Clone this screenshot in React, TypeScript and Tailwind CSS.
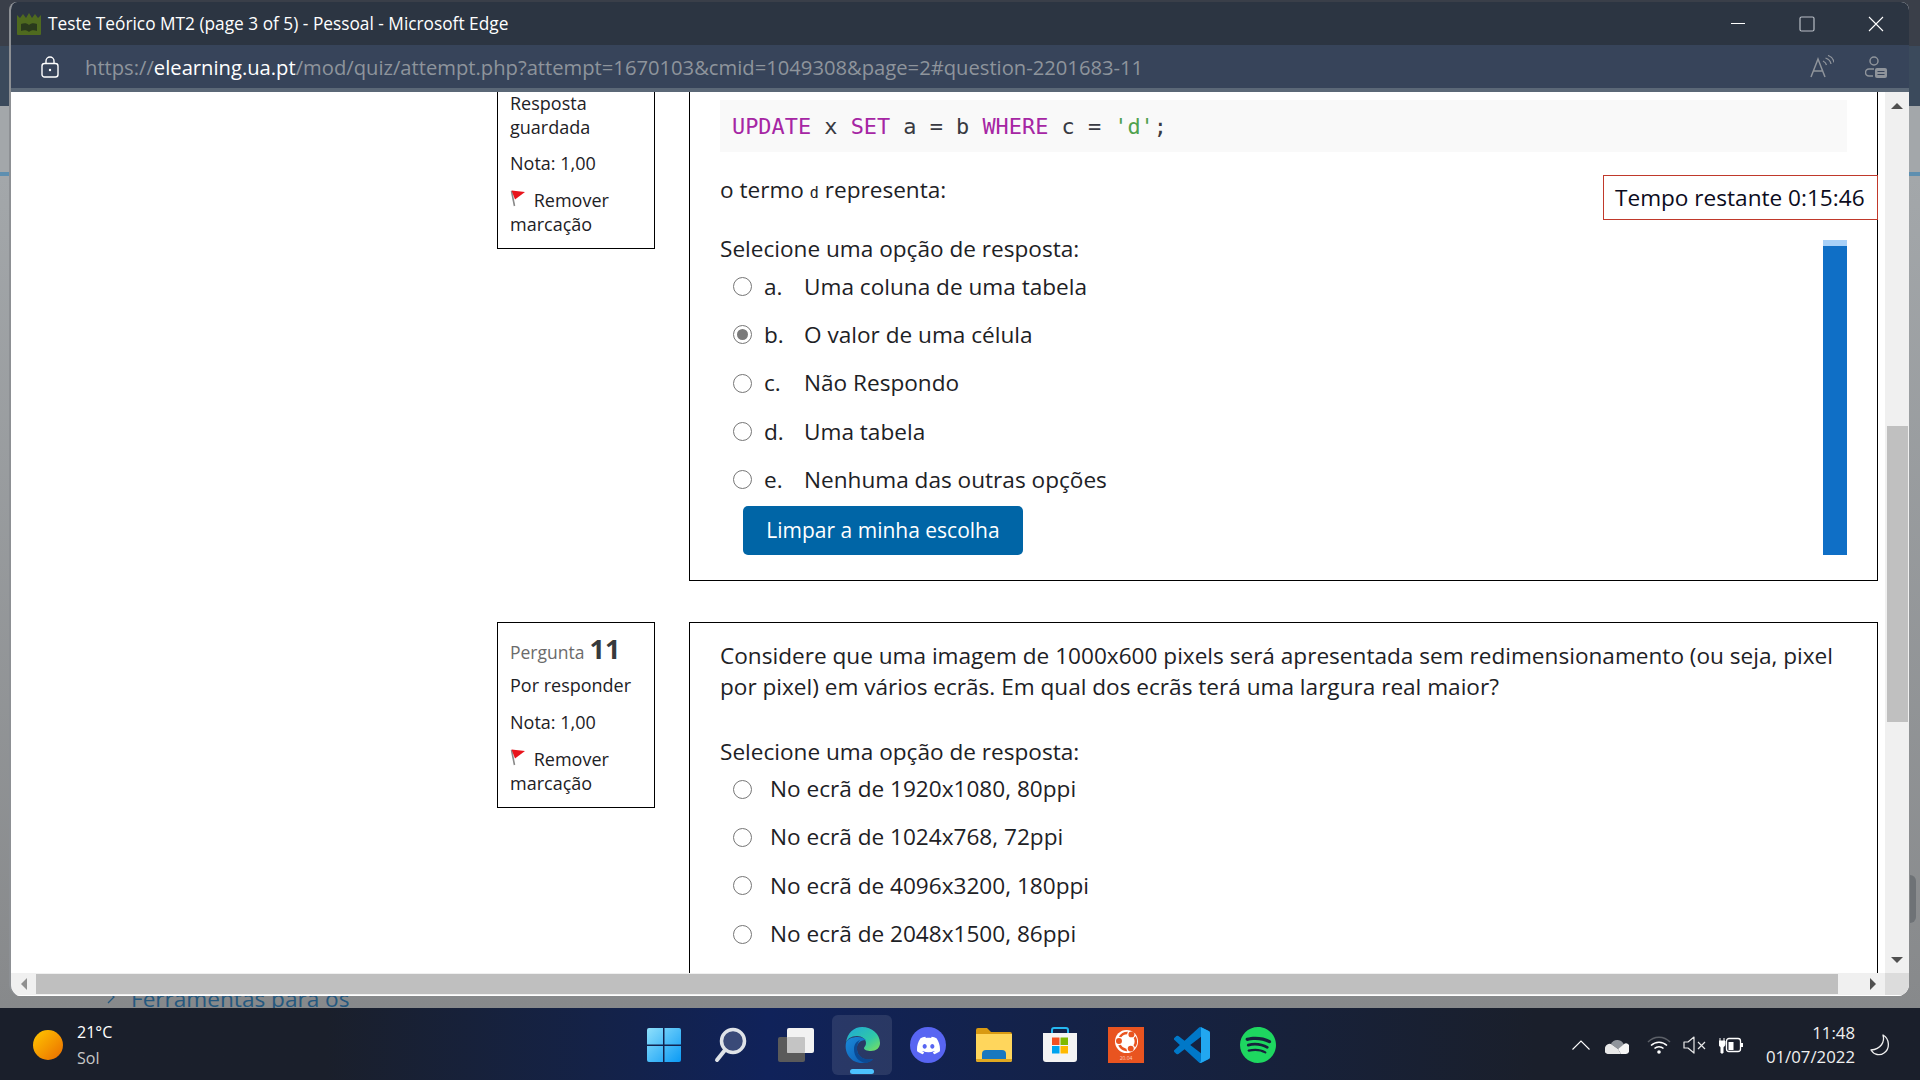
import { SiDiscord, SiSpotify, SiUbuntu } from 'react-icons/si';

const firstOptions = [
  { letter: 'a.', text: 'Uma coluna de uma tabela' },
  { letter: 'b.', text: 'O valor de uma célula', checked: true },
  { letter: 'c.', text: 'Não Respondo' },
  { letter: 'd.', text: 'Uma tabela' },
  { letter: 'e.', text: 'Nenhuma das outras opções' },
];

const secondOptions = [
  'No ecrã de 1920x1080, 80ppi',
  'No ecrã de 1024x768, 72ppi',
  'No ecrã de 4096x3200, 180ppi',
  'No ecrã de 2048x1500, 86ppi',
];

function Flag() {
  return (
    <svg width="16" height="17" viewBox="0 0 16 17" className="inline-block align-[0px]">
      <path d="M1.5 1l3 15" stroke="#8a8a8a" strokeWidth="1.6" />
      <path d="M1.5 0.5L15 2 5 9.5z" fill="#e8141c" />
    </svg>
  );
}

function Radio({ checked }: { checked?: boolean }) {
  return (
    <span className="mt-[1px] flex h-[19px] w-[19px] shrink-0 items-center justify-center rounded-full border-[1.5px] border-[#767676] bg-white">
      {checked && <span className="h-[11px] w-[11px] rounded-full bg-[#7a7a7a]" />}
    </span>
  );
}

function MarkToggle() {
  return (
    <div className="mt-[13px] leading-6">
      <Flag /> <span className="ml-[3px]">Remover</span>
      <br />
      marcação
    </div>
  );
}

function Favicon() {
  return (
    <svg width="24" height="23" viewBox="0 0 24 23">
      <rect width="24" height="23" rx="1" fill="#4f6a1f" />
      <path d="M0 0h24v3l-3 3-3-4-3 4-3-5-3 5-3-4-3 4-3-3z" fill="#2c3542" />
      <path d="M4 12c3-1 6-1 8 1 2-2 5-2 8-1v7c-3-1-6-1-8 1-2-2-5-2-8-1z" fill="#2a3a1c" />
    </svg>
  );
}

function WinControls() {
  return (
    <div className="flex items-center text-white">
      <svg width="16" height="16" viewBox="0 0 16 16" className="mr-[53px]">
        <path d="M1 7.5h14" stroke="#fff" strokeWidth="1" />
      </svg>
      <svg width="16" height="16" viewBox="0 0 16 16" className="mr-[53px]">
        <rect x="1" y="1" width="14" height="14" rx="1.5" fill="none" stroke="#b9bec6" strokeWidth="1.2" />
      </svg>
      <svg width="16" height="16" viewBox="0 0 16 16" className="mr-[25px]">
        <path d="M1 1l14 14M15 1L1 15" stroke="#fff" strokeWidth="1.1" />
      </svg>
    </div>
  );
}

function EdgeIcon() {
  return (
    <svg width="36" height="36" viewBox="0 0 36 36">
      <defs>
        <linearGradient id="edgeA" x1="0" y1="0" x2="1" y2="1">
          <stop offset="0" stopColor="#1fa8d8" />
          <stop offset="0.6" stopColor="#2fc8a8" />
          <stop offset="1" stopColor="#7ee05a" />
        </linearGradient>
        <linearGradient id="edgeB" x1="0" y1="0" x2="1" y2="1">
          <stop offset="0" stopColor="#1a88d8" />
          <stop offset="1" stopColor="#0c5ab0" />
        </linearGradient>
      </defs>
      <path d="M2 16C3 6 10 0 18 0c10 0 18 7 18 16 0 5-4 8-9 8-4 0-7-1-7-3 0-1 2-2 2-5 0-4-4-7-9-7-6 0-10 3-11 7z" fill="url(#edgeA)" />
      <path d="M2 16c-2 10 5 20 16 20 4 0 8-1 11-4-7 2-15-1-16-9-1-6 3-10 9-10-2-2-5-3-8-3-6 0-11 2-12 6z" fill="url(#edgeB)" />
      <path d="M13 22c0 8 9 12 16 10 1 0-2 3-7 4-7-1-12-6-12-14 0-5 3-8 6-9-2 2-3 5-3 9z" fill="#0b4a94" />
    </svg>
  );
}

function VsCodeIcon() {
  return (
    <svg width="36" height="36" viewBox="0 0 100 100">
      <path
        fillRule="evenodd"
        fill="#0078c8"
        d="M70.9 99.3a6.2 6.2 0 0 0 5-.2l20.6-9.9a6.2 6.2 0 0 0 3.5-5.6V16.4a6.2 6.2 0 0 0-3.5-5.6L75.9.9a6.2 6.2 0 0 0-7.1 1.2L29.4 38 12.2 25a4.2 4.2 0 0 0-5.3.2l-5.5 5a4.2 4.2 0 0 0 0 6.2L16.3 50 1.4 63.6a4.2 4.2 0 0 0 0 6.2l5.5 5a4.2 4.2 0 0 0 5.3.2l17.2-13 39.4 35.9a6.2 6.2 0 0 0 2.1 1.4ZM75 27.3 45.1 50 75 72.7V27.3Z"
      />
      <path fill="#22a7f0" d="M75 0.4l21.5 10.4a6.2 6.2 0 0 1 3.5 5.6v67.2a6.2 6.2 0 0 1-3.5 5.6L75.9 99.1a6.2 6.2 0 0 1-5-.2 6.2 6.2 0 0 0 4.1-5.8z" />
    </svg>
  );
}

function TaskbarIcons() {
  return (
    <div className="flex items-center gap-[30px]">
      {/* start */}
      <svg width="36" height="36" viewBox="0 0 36 36">
        <defs>
          <linearGradient id="startA" x1="0" y1="0" x2="1" y2="1">
            <stop offset="0" stopColor="#8fe0fb" />
            <stop offset="1" stopColor="#0a9af5" />
          </linearGradient>
        </defs>
        <path d="M1 3a2 2 0 0 1 2-2h14v16.5H1zM18.5 1H33a2 2 0 0 1 2 2v14.500H18.500zM1 19h16v16H3a2 2 0 0 1-2-2zM18.500 19H35v14a2 2 0 0 1-2 2H18.500z" fill="url(#startA)" />
      </svg>
      {/* search */}
      <svg width="36" height="36" viewBox="0 0 36 36">
        <circle cx="21" cy="14" r="11.500" fill="#3a4a78" stroke="#dfe3e8" strokeWidth="3.500" />
        <path d="M13 23L5 33" stroke="#dfe3e8" strokeWidth="4" strokeLinecap="round" />
      </svg>
      {/* task view */}
      <svg width="36" height="36" viewBox="0 0 36 36">
        <rect x="0" y="10" width="27" height="25" rx="2" fill="#5a5a5a" />
        <rect x="9" y="1" width="27" height="25" rx="2" fill="#f2f2f2" />
        <rect x="9" y="10" width="18" height="16" rx="1" fill="#c4c4c4" />
      </svg>
      {/* edge, running */}
      <div className="relative h-[36px] w-[36px]">
        <div className="absolute -left-[12px] -top-[12px] h-[60px] w-[60px] rounded-md bg-[#ffffff]/10" />
        <div className="absolute left-[6px] top-[42px] h-[5px] w-[24px] rounded-full bg-[#4cc2ff]" />
        <div className="relative">
          <EdgeIcon />
        </div>
      </div>
      {/* discord */}
      <div className="flex h-[36px] w-[36px] items-center justify-center rounded-full bg-[#5865f2]">
        <SiDiscord className="text-[23px] text-white" />
      </div>
      {/* explorer */}
      <svg width="36" height="36" viewBox="0 0 36 36">
        <path d="M0 3a2 2 0 0 1 2-2h9l4 4h19a2 2 0 0 1 2 2v4H0z" fill="#d99a12" />
        <path d="M0 7h36v26a2 2 0 0 1-2 2H2a2 2 0 0 1-2-2z" fill="#ffd65c" />
        <path d="M6 35v-8a4 4 0 0 1 4-4h16a4 4 0 0 1 4 4v8z" fill="#1878c0" />
        <path d="M0 32h36v1a2 2 0 0 1-2 2H2a2 2 0 0 1-2-2z" fill="#e0a820" />
      </svg>
      {/* store */}
      <svg width="36" height="36" viewBox="0 0 36 36">
        <path d="M10 7V3a2 2 0 0 1 2-2h12a2 2 0 0 1 2 2v4" fill="none" stroke="#25b7f0" strokeWidth="2" />
        <path d="M1 6h34v26a3 3 0 0 1-3 3H4a3 3 0 0 1-3-3z" fill="#f4f4f4" />
        <rect x="10" y="10.500" width="7.500" height="7.500" fill="#f25022" />
        <rect x="18.500" y="10.500" width="7.500" height="7.500" fill="#7fba00" />
        <rect x="10" y="19" width="7.500" height="7.500" fill="#00a4ef" />
        <rect x="18.500" y="19" width="7.500" height="7.500" fill="#ffb900" />
      </svg>
      {/* ubuntu */}
      <div className="flex h-[36px] w-[36px] flex-col items-center bg-[#e95420] pt-[3px]">
        <div className="flex h-[23px] w-[23px] items-center justify-center rounded-full bg-white">
          <SiUbuntu className="text-[21px] text-[#e95420]" />
        </div>
        <span className="mt-[2px] text-[5px] leading-[6px] text-[#ffd0c0]">20.04</span>
      </div>
      <VsCodeIcon />
      <SiSpotify className="text-[36px] text-[#1ed760]" />
    </div>
  );
}

function TrayIcons() {
  return (
    <div className="flex items-center">
      <svg width="18" height="10" viewBox="0 0 18 10" className="mr-[15px]">
        <path d="M0.500 9.500L9 1l8.500 8.500" fill="none" stroke="#fff" strokeWidth="1.100" />
      </svg>
      <svg width="24" height="17" viewBox="0 0 24 17" className="mr-[18px]">
        <path d="M6 7a7 7 0 0 1 13 1l-6 4z" fill="#8f949b" />
        <path d="M0 13a5 5 0 0 1 6-6l7 5 3 5H3a3 3 0 0 1-3-4z" fill="#e8e8e8" />
        <path d="M13 12l5-4a3.500 3.500 0 0 1 6 5 3.500 3.500 0 0 1-3 4h-5z" fill="#f6f6f6" />
      </svg>
      <svg width="24" height="18" viewBox="0 0 24 18" className="mr-[12px]">
        <path d="M1 6c6-6.500 16-6.500 22 0" fill="none" stroke="#5c6068" strokeWidth="1.500" />
        <path d="M4 9.500c4.500-4.500 11.500-4.500 16 0M7.500 12.500c2.500-2.500 6.500-2.500 9 0" fill="none" stroke="#fff" strokeWidth="1.500" />
        <circle cx="12" cy="16" r="1.800" fill="#fff" />
      </svg>
      <svg width="23" height="18" viewBox="0 0 23 18" className="mr-[13px]">
        <path d="M1 6v6h4l6 5V1L5 6z" fill="none" stroke="#e8e8e8" strokeWidth="1.200" strokeLinejoin="round" />
        <path d="M15 6l7 7M22 6l-7 7" stroke="#e8e8e8" strokeWidth="1.200" />
      </svg>
      <svg width="24" height="18" viewBox="0 0 24 18" className="mr-[23px]">
        <path d="M1 2v3M5 2v3M0 5h6v3a3 3 0 0 1-2 3v6H2v-6a3 3 0 0 1-2-3z" fill="#fff" stroke="#fff" strokeWidth="1" />
        <rect x="7.500" y="2.500" width="14" height="13" rx="2.500" fill="none" stroke="#fff" strokeWidth="1.300" />
        <rect x="9.500" y="6" width="5" height="8" fill="#fff" />
        <rect x="22" y="7" width="2" height="4" fill="#fff" />
      </svg>
      <div className="mr-[15px] text-right text-[16.800px] leading-[24px] text-[#f0f0f0]">
        <div>11:48</div>
        <div>01/07/2022</div>
      </div>
      <svg width="20" height="22" viewBox="0 0 20 22" className="mr-[30px]">
        <path d="M13 1c2 7-2 14-12 15 3 5 9 6 13 3 6-4 6-14-1-18z" fill="none" stroke="#f0f0f0" strokeWidth="1.300" strokeLinejoin="round" />
      </svg>
    </div>
  );
}

export default function App() {
  return (
    <div className="flex h-screen w-screen flex-col overflow-hidden bg-black font-['Open_Sans',sans-serif] text-[#1d2125]">
      {/* desktop behind the window */}
      <div className="relative flex-1 overflow-hidden">
        <div className="flex h-full flex-col">
          <div className="h-[46px] shrink-0 bg-[#3a3f49]" />
          <div className="h-[60px] shrink-0 bg-[#3b4a5c]" />
          <div className="h-[66px] shrink-0 bg-[#a3a7aa]" />
          <div className="h-[4px] shrink-0 bg-[#5e8fb0]" />
          <div className="flex-1 bg-gradient-to-b from-[#a3a7aa] to-[#87898b]" />
        </div>
        <div className="absolute left-[107px] top-[990px] text-[10px] leading-none text-[#24587f]">
          <svg width="9" height="14" viewBox="0 0 9 14">
            <path d="M1 1l6 6-6 6" fill="none" stroke="#24587f" strokeWidth="1.300" />
          </svg>
        </div>
        <div className="absolute left-[131px] top-[983px] whitespace-nowrap text-[22.600px] leading-[32px] text-[#24587f]">
          Ferramentas para os
        </div>
        <div className="absolute left-[1910px] top-[875px] h-[48px] w-[6px] rounded-r-md bg-[#6e7276]" />

        {/* edge window */}
        <div className="absolute left-[9px] top-[2px] flex h-[994px] w-[1900px] flex-col overflow-hidden rounded-b-xl rounded-t-lg border-l-2 border-[#8d9094] bg-white">
          <div className="flex h-[43px] shrink-0 items-center bg-[#2c3542] pl-[6px] text-white">
            <Favicon />
            <span className="ml-[7px] flex-1 text-[17.300px]">Teste Teórico MT2 (page 3 of 5) - Pessoal - Microsoft Edge</span>
            <WinControls />
          </div>
          <div className="flex h-[47px] shrink-0 items-center border-b-[4px] border-b-[#5b6877] bg-[#37445a] pl-[30px]">
            <svg width="18" height="22" viewBox="0 0 18 22">
              <rect x="1" y="7.500" width="16" height="13.500" rx="2.500" fill="none" stroke="#fff" strokeWidth="1.400" />
              <path d="M5 7.500V5a4 4 0 0 1 8 0v2.500" fill="none" stroke="#fff" strokeWidth="1.400" />
              <circle cx="9" cy="14" r="1.200" fill="#fff" />
            </svg>
            <span className="ml-[26px] mt-[2px] flex-1 text-[20.200px] text-[#8e949c]">
              https://<span className="text-white">elearning.ua.pt</span>/mod/quiz/attempt.php?attempt=1670103&amp;cmid=1049308&amp;page=2#question-2201683-11
            </span>
            <svg width="24" height="23" viewBox="0 0 24 23" className="mr-[31px]">
              <path d="M1 22L8 4l7 18M3.500 16h9" fill="none" stroke="#8f949b" strokeWidth="1.500" />
              <path d="M13 6c2 1 3 2 3.500 4M15.500 3c3 1 5 3 5.500 6M18 0.500c3.500 1 5.500 4 6 7" fill="none" stroke="#8f949b" strokeWidth="1.300" />
            </svg>
            <svg width="22" height="22" viewBox="0 0 22 22" className="mr-[22px]">
              <circle cx="9" cy="5" r="4" fill="none" stroke="#8f949b" strokeWidth="1.500" />
              <path d="M8 20H4a3 3 0 0 1 0-7h5" fill="none" stroke="#8f949b" strokeWidth="1.500" />
              <rect x="10" y="12" width="12" height="10" rx="2" fill="#8f949b" />
              <path d="M12.500 15.500h7M12.500 18.500h7" stroke="#37445a" strokeWidth="1.200" />
            </svg>
          </div>

          <div className="flex min-h-0 flex-1">
            {/* page */}
            <div className="min-w-0 flex-1 overflow-hidden pl-[486px]">
              {/* question 10, scrolled past its top */}
              <div className="flex h-[489px] items-start gap-[34px]">
                <div className="w-[158px] border-x border-b border-black px-3 pb-[12px] text-[18px] leading-6">
                  <div className="-mt-[1px]">Resposta guardada</div>
                  <div className="mt-3">Nota: 1,00</div>
                  <MarkToggle />
                </div>
                <div className="relative flex h-[489px] w-[1189px] border-x border-b border-black pb-[25px] pl-[30px] pr-[30px]">
                  <div className="flex-1 text-[22.600px] leading-[31px]">
                    <div className="mr-[-24px] mt-[8px] flex h-[52px] items-center bg-[#f9f9f9] pl-[12px] font-['DejaVu_Sans_Mono',monospace] text-[#383a42]">
                      <span className="whitespace-pre text-[21.900px]">
                        <span className="text-[#a626a4]">UPDATE</span> x <span className="text-[#a626a4]">SET</span> a = b <span className="text-[#a626a4]">WHERE</span> c = <span className="text-[#50a14f]">'d'</span>;
                      </span>
                    </div>
                    <p className="mt-[22px]">
                      o termo <code className="font-['DejaVu_Sans_Mono',monospace] text-[15px]">d</code> representa:
                    </p>
                    <p className="mt-[24px]">Selecione uma opção de resposta:</p>
                    <div className="-mt-[2px]">
                      {firstOptions.map((o) => (
                        <label key={o.letter} className="flex h-[48.300px] items-center pl-[13px]">
                          <Radio checked={o.checked} />
                          <span className="ml-[12px] w-[40px]">{o.letter}</span>
                          <span>{o.text}</span>
                        </label>
                      ))}
                    </div>
                    <button className="ml-[23px] mt-[3px] h-[49px] w-[280px] rounded-[5px] bg-[#0065a6] text-center text-[21px] text-white">
                      Limpar a minha escolha
                    </button>
                  </div>
                  <div className="relative h-[315px] w-[24px] self-end border-t-[6px] border-t-[#a8d1f8] bg-[#0f6fc6]" />
                  {/* sticky timer */}
                  <div className="absolute right-[-1px] top-[83px] flex h-[45px] w-[275px] items-center whitespace-nowrap border border-[#c0392b] bg-white pl-[11px] text-[22.600px] text-[#0b0b20]">
                    Tempo restante 0:15:46
                  </div>
                </div>
              </div>

              {/* question 11 */}
              <div className="mt-[41px] flex items-start gap-[34px]">
                <div className="w-[158px] border border-black px-3 pb-[12px] pt-[8px] text-[18px] leading-6">
                  <div className="flex h-[36px] items-baseline">
                    <span className="text-[17.500px] text-[#6b6b6b]">Pergunta</span>
                    <span className="ml-[5px] text-[27px] font-bold leading-[36px] text-[#373a3c]">11</span>
                  </div>
                  <div className="mt-[6px]">Por responder</div>
                  <div className="mt-[13px]">Nota: 1,00</div>
                  <MarkToggle />
                </div>
                <div className="h-[500px] w-[1189px] border border-black pl-[30px] pr-[29px] pt-[17px] text-[22.600px] leading-[31px]">
                  <p>
                    Considere que uma imagem de 1000x600 pixels será apresentada sem redimensionamento (ou seja, pixel por pixel) em vários ecrãs. Em qual dos ecrãs terá uma largura real maior?
                  </p>
                  <p className="mt-[34px]">Selecione uma opção de resposta:</p>
                  <div className="-mt-[2.500px]">
                    {secondOptions.map((o) => (
                      <label key={o} className="flex h-[48.300px] items-center pl-[13px]">
                        <Radio />
                        <span className="ml-[18px]">{o}</span>
                      </label>
                    ))}
                  </div>
                </div>
              </div>
            </div>

            {/* vertical scrollbar */}
            <div className="relative flex w-[24px] shrink-0 flex-col items-center bg-[#f0f0f0]">
              <div className="mt-[11px] h-0 w-0 border-x-[6px] border-b-[6px] border-x-transparent border-b-[#505050]" />
              <div className="absolute left-[2px] top-[334px] h-[296px] w-[21px] bg-[#c0c0c0]" />
              <div className="mb-[10px] mt-auto h-0 w-0 border-x-[6px] border-t-[6px] border-x-transparent border-t-[#505050]" />
            </div>
          </div>

          {/* horizontal scrollbar */}
          <div className="flex h-[23px] shrink-0 items-center border-b border-white bg-[#f0f0f0]">
            <div className="flex w-[25px] justify-center">
              <div className="h-0 w-0 border-y-[6px] border-r-[6px] border-y-transparent border-r-[#909090]" />
            </div>
            <div className="h-[20px] w-[1802px] bg-[#bfbfbf]" />
            <div className="flex flex-1 justify-end pr-[9px]">
              <div className="h-0 w-0 border-y-[6px] border-l-[6px] border-y-transparent border-l-[#505050]" />
            </div>
            <div className="h-full w-[24px] bg-[#dcdcdc]" />
          </div>
        </div>
      </div>

      {/* taskbar */}
      <div className="flex h-[72px] shrink-0 items-center bg-gradient-to-r from-[#1a1f2b] from-[17%] via-[#10225a] via-[40%] to-[#1a1f2b] to-[80%] pt-[2px] text-white">
        <div className="flex w-[646px] items-center pl-[33px]">
          <div className="h-[30px] w-[30px] rounded-full bg-gradient-to-br from-[#ffc800] to-[#e86a00]" />
          <div className="ml-[14px] text-[16px] leading-[26px]">
            <div>21°C</div>
            <div className="text-[#c8c8c8]">Sol</div>
          </div>
        </div>
        <TaskbarIcons />
        <div className="ml-auto">
          <TrayIcons />
        </div>
      </div>
    </div>
  );
}
